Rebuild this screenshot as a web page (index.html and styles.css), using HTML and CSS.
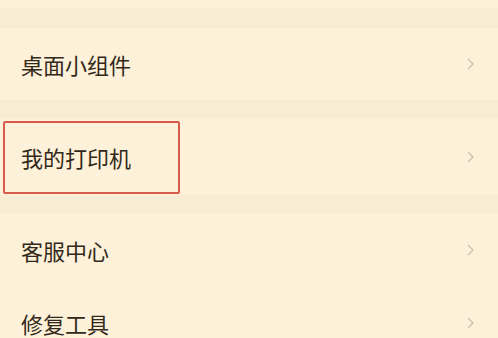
FILE: index.html
```html
<!DOCTYPE html>
<html lang="zh">
<head>
<meta charset="utf-8">
<link rel="stylesheet" href="styles.css">
</head>
<body>
<div class="page">
  <div class="card card-top"></div>
  <div class="gap"></div>
  <div class="card">
    <div class="row row-a"><span class="label">桌面小组件</span><svg class="chev" viewBox="0 0 7 12"><path d="M1 1 L6 6 L1 11" /></svg></div>
  </div>
  <div class="gap"></div>
  <div class="card">
    <div class="row row-b"><span class="label">我的打印机</span><svg class="chev" viewBox="0 0 7 12"><path d="M1 1 L6 6 L1 11" /></svg>
      <div class="highlight"></div>
    </div>
  </div>
  <div class="gap"></div>
  <div class="card">
    <div class="row row-c"><span class="label">客服中心</span><svg class="chev" viewBox="0 0 7 12"><path d="M1 1 L6 6 L1 11" /></svg></div>
    <div class="row row-c"><span class="label">修复工具</span><svg class="chev" viewBox="0 0 7 12"><path d="M1 1 L6 6 L1 11" /></svg></div>
  </div>
</div>
</body>
</html>
```
FILE: styles.css
```css
html, body {
  margin: 0;
  padding: 0;
  background: #fdf1d9;
}
.page {
  width: 498px;
  height: 338px;
  overflow: hidden;
  display: flex;
  flex-direction: column;
  font-family: "Noto Sans CJK SC", "Noto Sans", sans-serif;
}
.card {
  background: #fdf1d9;
  flex: none;
}
.card-top {
  height: 8px;
}
.gap {
  height: 20px;
  flex: none;
  background: #f8ecd5;
}
.gap + .card + .gap {
  height: 18px;
}
.row {
  position: relative;
  display: flex;
  align-items: center;
  justify-content: space-between;
  padding: 0 24px 0 21px;
}
.row-a { height: 72px; }
.row-b { height: 77px; }
.row-c { height: 73px; }
.label {
  font-size: 22px;
  color: #33291a;
  line-height: 1;
}
.chev {
  width: 7px;
  height: 12px;
  fill: none;
  stroke: #c9c0af;
  stroke-width: 1.3;
}
.highlight {
  position: absolute;
  left: 3px;
  top: 3px;
  width: 173px;
  height: 69px;
  border: 2px solid #d85a4c;
  border-radius: 2px;
}
```
